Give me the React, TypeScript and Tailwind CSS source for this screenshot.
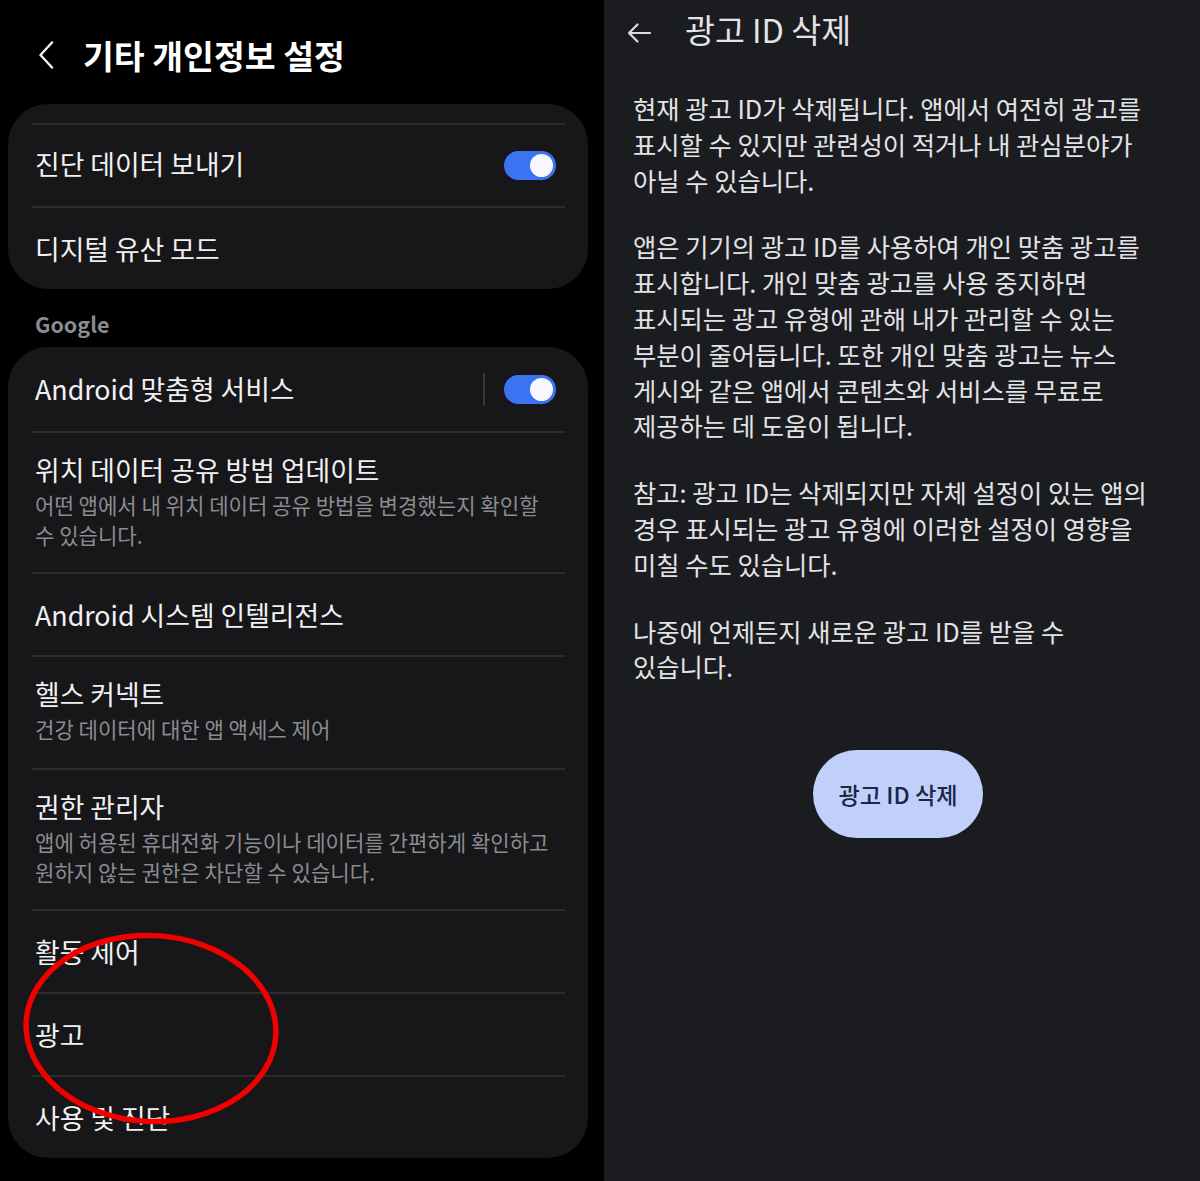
import React from 'react'

const FONT = { fontFamily: '"Noto Sans CJK KR", "Noto Sans", sans-serif' }

type Item = {
  title: string
  lines?: string[]
  pb?: string
}

function Toggle() {
  return (
    <div className="flex h-[29px] w-[52px] items-center justify-end rounded-full bg-[#3b74f2] pr-[3px]">
      <div className="h-[23px] w-[23px] rounded-full bg-[#f7f8ff]" />
    </div>
  )
}

function Row({ item, divider = true }: { item: Item; divider?: boolean }) {
  if (!item.lines) {
    return (
      <div className={divider ? 'border-t-2 border-[#2c2c30]' : ''}>
        <div className="flex h-[81px] items-center pl-[3px] text-[26.8px] leading-[36px] text-[#f1f1f3]">
          {item.title}
        </div>
      </div>
    )
  }
  return (
    <div className={`border-t-2 border-[#2c2c30] pt-[19px] pl-[3px] ${item.pb ?? 'pb-[22px]'}`}>
      <div className="text-[26.8px] leading-[36px] text-[#f1f1f3]">{item.title}</div>
      <div className="mt-[2px] text-[21.1px] leading-[30px] text-[#8c8c90]">
        {item.lines.map((l) => (
          <div key={l} className="whitespace-nowrap">
            {l}
          </div>
        ))}
      </div>
    </div>
  )
}

function SettingsPanel() {
  const googleItems: Item[] = [
    {
      title: '위치 데이터 공유 방법 업데이트',
      lines: ['어떤 앱에서 내 위치 데이터 공유 방법을 변경했는지 확인할', '수 있습니다.'],
    },
    { title: 'Android 시스템 인텔리전스' },
    { title: '헬스 커넥트', lines: ['건강 데이터에 대한 앱 액세스 제어'], pb: 'pb-[24px]' },
    {
      title: '권한 관리자',
      lines: ['앱에 허용된 휴대전화 기능이나 데이터를 간편하게 확인하고', '원하지 않는 권한은 차단할 수 있습니다.'],
    },
    { title: '활동 제어' },
    { title: '광고' },
    { title: '사용 및 진단' },
  ]

  return (
    <div className="relative w-[604px] shrink-0 bg-black">
      {/* header */}
      <div className="flex h-[104px] items-start pt-[37px]">
        <svg width="16" height="28" viewBox="0 0 16 28" className="ml-[38px] mt-[4px]">
          <path d="M14 1.5 L2.5 14 L14 26.5" fill="none" stroke="#f2f2f2" strokeWidth="2.4" strokeLinecap="round" strokeLinejoin="round" />
        </svg>
        <h1 className="ml-[29px] text-[33.5px] font-bold leading-[36px] text-white">기타 개인정보 설정</h1>
      </div>

      {/* first card */}
      <div className="ml-2 mr-4 rounded-[40px] bg-[#17171a] pl-6 pr-[23px] pt-[19px]">
        <div className="border-t-2 border-[#2c2c30]">
          <div className="flex h-[81px] items-center justify-between pl-[3px] pr-[9px]">
            <span className="-mt-[3px] text-[26.8px] leading-[36px] text-[#f1f1f3]">진단 데이터 보내기</span>
            <Toggle />
          </div>
        </div>
        <Row item={{ title: '디지털 유산 모드' }} />
      </div>

      <div className="h-[58px] pl-[35px] pt-[23px] text-[21.5px] font-semibold leading-[24px] text-[#8b8b8f]">
        Google
      </div>

      {/* google card */}
      <div className="ml-2 mr-4 rounded-[40px] bg-[#17171a] pl-6 pr-[23px]">
        <div className="flex h-[84px] items-center justify-between pl-[3px] pr-[9px]">
          <span className="text-[26.8px] leading-[36px] text-[#f1f1f3]">Android 맞춤형 서비스</span>
          <div className="flex items-center gap-[19px]">
            <div className="h-[33px] w-[2px] bg-[#38383c]" />
            <Toggle />
          </div>
        </div>
        {googleItems.map((it) => (
          <Row key={it.title} item={it} />
        ))}
      </div>

      {/* red annotation circle */}
      <svg className="pointer-events-none absolute left-0 top-[900px]" width="300" height="260" viewBox="0 900 300 260">
        <ellipse cx="151" cy="1028.5" rx="125" ry="93" transform="rotate(3 151 1028.5)" fill="none" stroke="#f20000" strokeWidth="5.5" />
      </svg>
    </div>
  )
}

function AdIdPanel() {
  const paragraphs = [
    ['현재 광고 ID가 삭제됩니다. 앱에서 여전히 광고를', '표시할 수 있지만 관련성이 적거나 내 관심분야가', '아닐 수 있습니다.'],
    [
      '앱은 기기의 광고 ID를 사용하여 개인 맞춤 광고를',
      '표시합니다. 개인 맞춤 광고를 사용 중지하면',
      '표시되는 광고 유형에 관해 내가 관리할 수 있는',
      '부분이 줄어듭니다. 또한 개인 맞춤 광고는 뉴스',
      '게시와 같은 앱에서 콘텐츠와 서비스를 무료로',
      '제공하는 데 도움이 됩니다.',
    ],
    ['참고: 광고 ID는 삭제되지만 자체 설정이 있는 앱의', '경우 표시되는 광고 유형에 이러한 설정이 영향을', '미칠 수도 있습니다.'],
    ['나중에 언제든지 새로운 광고 ID를 받을 수', '있습니다.'],
  ]

  return (
    <div className="flex-1 bg-[#1b1c20]">
      <div className="flex h-[91px] items-start pt-[11px]">
        <svg width="26" height="22" viewBox="0 0 26 22" className="ml-[22px] mt-[11px]">
          <path d="M24 11 H3 M11.5 2.5 L3 11 L11.5 19.5" fill="none" stroke="#dcdce0" strokeWidth="2.2" strokeLinecap="round" strokeLinejoin="round" />
        </svg>
        <h2 className="ml-[33px] text-[32.5px] leading-[36px] text-[#e4e4e8]">광고 ID 삭제</h2>
      </div>
      <div className="flex flex-col gap-[31px] pl-[29px] text-[25.3px] leading-[35.8px] text-[#e3e3e7]">
        {paragraphs.map((p, i) => (
          <p key={i}>
            {p.map((l) => (
              <span key={l} className="block whitespace-nowrap">
                {l}
              </span>
            ))}
          </p>
        ))}
      </div>
      <div className="mt-[65px] flex justify-center pr-[8px]">
        <button className="h-[88px] w-[170px] rounded-full bg-[#c0d0fb] text-[23.2px] font-medium text-[#1a2745]">광고 ID 삭제</button>
      </div>
    </div>
  )
}

export default function App() {
  return (
    <div className="flex h-[1181px] w-[1200px] overflow-hidden" style={FONT}>
      <SettingsPanel />
      <AdIdPanel />
    </div>
  )
}
